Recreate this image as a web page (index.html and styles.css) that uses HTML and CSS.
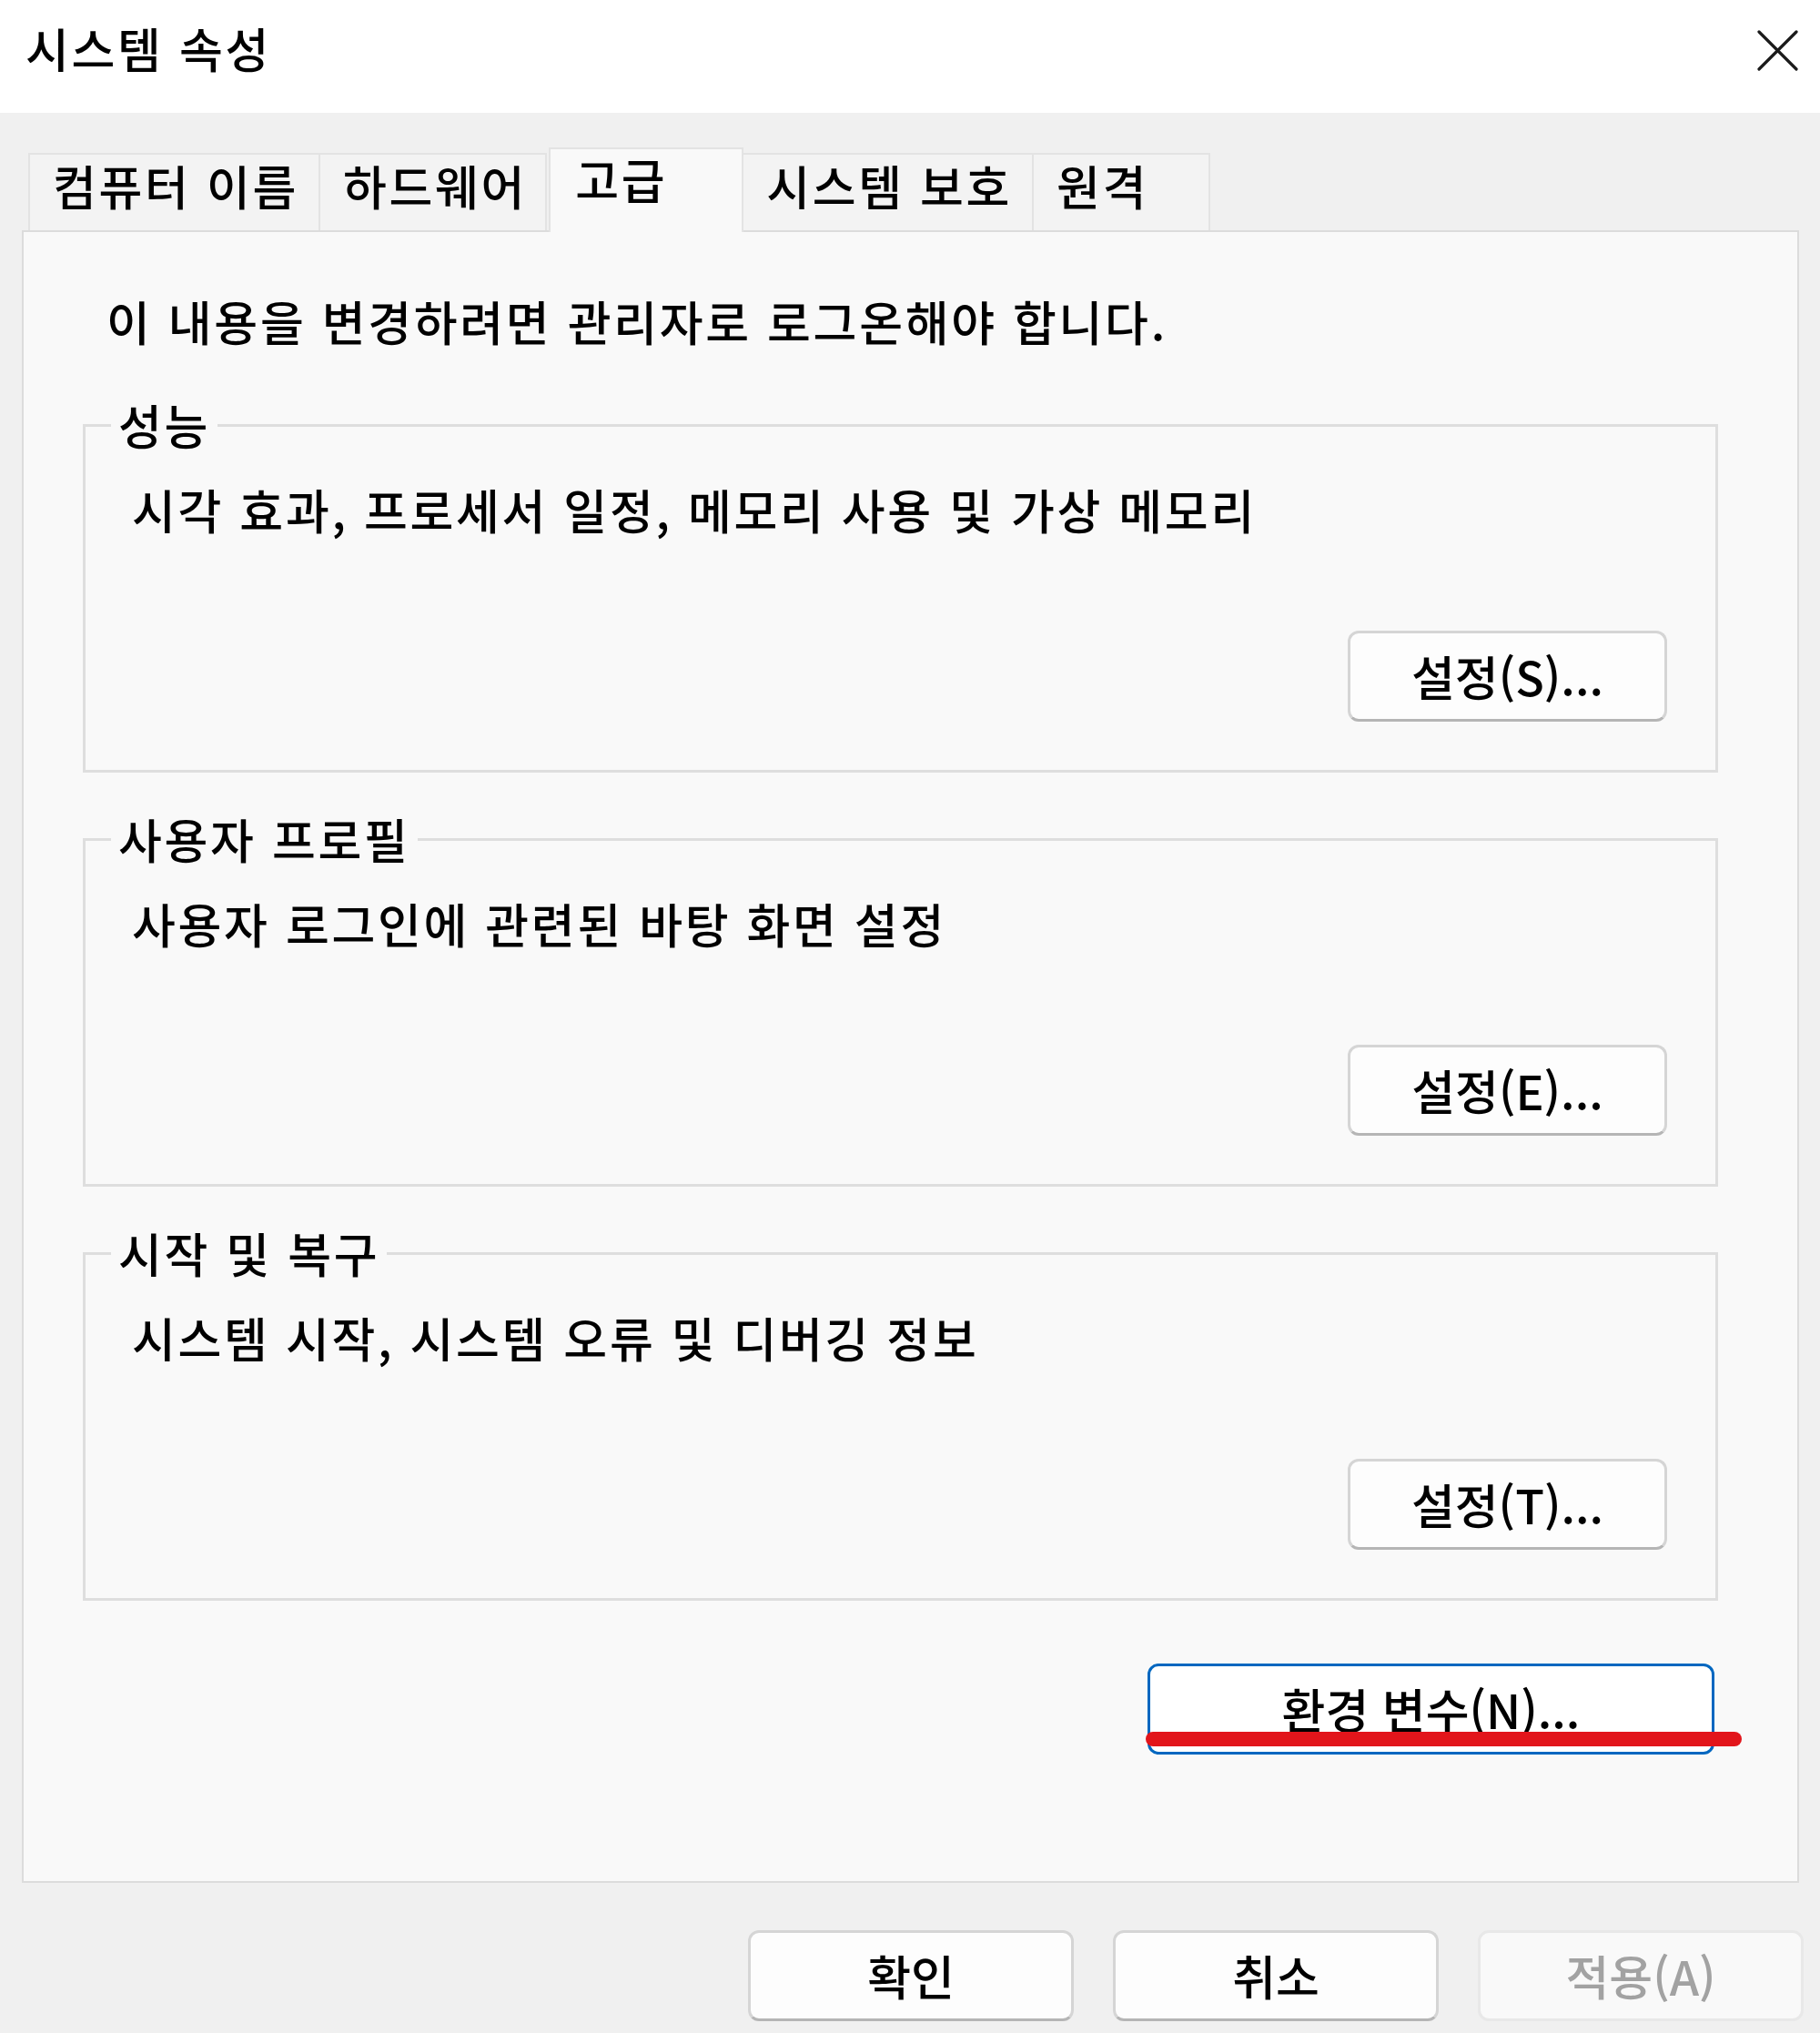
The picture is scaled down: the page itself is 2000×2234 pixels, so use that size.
FILE: index.html
```html
<!DOCTYPE html>
<html lang="ko">
<head>
<meta charset="utf-8">
<title>시스템 속성</title>
<link rel="stylesheet" href="styles.css">
</head>
<body>
<div class="window">
  <header class="titlebar">
    <span class="title">시스템 속성</span>
    <button class="close" aria-label="닫기">
      <svg viewBox="0 0 45 45" width="45" height="45"><path d="M2 2 L43 43 M43 2 L2 43" stroke="#1b1b1b" stroke-width="3.2" stroke-linecap="round" fill="none"/></svg>
    </button>
  </header>
  <nav class="tabs">
    <div class="tab">컴퓨터 이름</div>
    <div class="tab tab-hw">하드웨어</div>
    <div class="tab tab-active">고급</div>
    <div class="tab">시스템 보호</div>
    <div class="tab">원격</div>
  </nav>
  <main class="panel">
    <p class="note">이 내용을 변경하려면 관리자로 로그온해야 합니다.</p>
    <fieldset class="group">
      <legend>성능</legend>
      <p class="desc">시각 효과, 프로세서 일정, 메모리 사용 및 가상 메모리</p>
      <div class="group-actions"><button class="btn">설정(S)...</button></div>
    </fieldset>
    <fieldset class="group">
      <legend>사용자 프로필</legend>
      <p class="desc">사용자 로그인에 관련된 바탕 화면 설정</p>
      <div class="group-actions"><button class="btn">설정(E)...</button></div>
    </fieldset>
    <fieldset class="group">
      <legend>시작 및 복구</legend>
      <p class="desc">시스템 시작, 시스템 오류 및 디버깅 정보</p>
      <div class="group-actions"><button class="btn">설정(T)...</button></div>
    </fieldset>
    <div class="env-row">
      <div class="env-wrap">
        <button class="btn btn-default">환경 변수(N)...</button>
        <span class="mark"></span>
      </div>
    </div>
  </main>
  <footer class="actions">
    <button class="btn btn-foot">확인</button>
    <button class="btn btn-foot">취소</button>
    <button class="btn btn-foot" disabled>적용(A)</button>
  </footer>
</div>
</body>
</html>
```
FILE: styles.css
```css
html, body {
  margin: 0;
  padding: 0;
}
body {
  background: #f0f0f0;
  font-family: "Noto Sans CJK KR", "Noto Sans", sans-serif;
  font-size: 52px;
  font-weight: 500;
  letter-spacing: 2.7px;
  color: #000;
}
.window {
  width: 2000px;
  height: 2234px;
  display: flex;
  flex-direction: column;
  overflow: hidden;
}
.titlebar {
  box-sizing: border-box;
  height: 124px;
  background: #fff;
  display: flex;
  justify-content: space-between;
  align-items: flex-start;
  padding: 23px 24px 0 28px;
}
.title {
  line-height: 60px;
}
.close {
  border: 0;
  background: none;
  padding: 0;
  margin-top: 10px;
  width: 45px;
  height: 45px;
}
.close svg {
  display: block;
}
.tabs {
  box-sizing: border-box;
  height: 129px;
  display: flex;
  align-items: flex-end;
  padding-left: 31px;
  position: relative;
  z-index: 1;
}
.tab {
  box-sizing: border-box;
  height: 85px;
  min-width: 196px;
  padding: 4px 22px 0 25px;
  border: 2px solid #e3e3e3;
  border-bottom: 0;
  background: #f3f3f3;
  line-height: 60px;
  white-space: nowrap;
}
.tab + .tab {
  margin-left: -2px;
}
.tab-hw {
  padding-right: 20px;
}
.tab-active {
  position: relative;
  z-index: 2;
  height: 93px;
  min-width: 214px;
  margin-bottom: -2px;
  margin-left: 2px !important;
  padding: 3px 20px 0 27px;
  background: #f9f9f9;
}
.panel {
  margin: 0 23px 0 24px;
  border: 2px solid #dcdcdc;
  background: #f9f9f9;
  padding: 68px 0 139px;
}
.note {
  margin: 0;
  padding-left: 91px;
  line-height: 60px;
}
.group {
  margin: 43px 87px 0 65px;
  padding: 0;
  border: 3px solid #dedede;
  min-width: 0;
}
.note + .group {
  margin-top: 54px;
}
.group legend {
  margin-left: 28px;
  padding: 0 8px;
  line-height: 60px;
}
.desc {
  margin: 33px 0 0;
  padding-left: 51px;
  line-height: 60px;
}
.group-actions {
  display: flex;
  justify-content: flex-end;
  padding: 103px 53px 53px 0;
}
.btn {
  box-sizing: border-box;
  width: 351px;
  height: 100px;
  padding: 0;
  border: 3px solid #d5d5d5;
  border-bottom-color: #b5b5b5;
  border-radius: 12px;
  background: #fdfdfd;
  font: inherit;
  letter-spacing: 0;
  color: #000;
  line-height: 60px;
}
.env-row {
  display: flex;
  justify-content: flex-end;
  margin-top: 69px;
  padding-right: 91px;
}
.env-wrap {
  position: relative;
}
.btn-default {
  display: block;
  width: 623px;
  border-color: #0067c0;
  background: #fff;
}
.mark {
  position: absolute;
  left: -2px;
  right: -30px;
  top: 75px;
  height: 16px;
  border-radius: 8px;
  background: #e2151b;
}
.actions {
  display: flex;
  justify-content: flex-end;
  gap: 43px;
  margin-top: 52px;
  padding-right: 18px;
}
.btn-foot {
  width: 358px;
}
.btn:disabled {
  color: #a2a2a2;
  border-color: #e8e8e8;
  background: #f9f9f9;
}
```
